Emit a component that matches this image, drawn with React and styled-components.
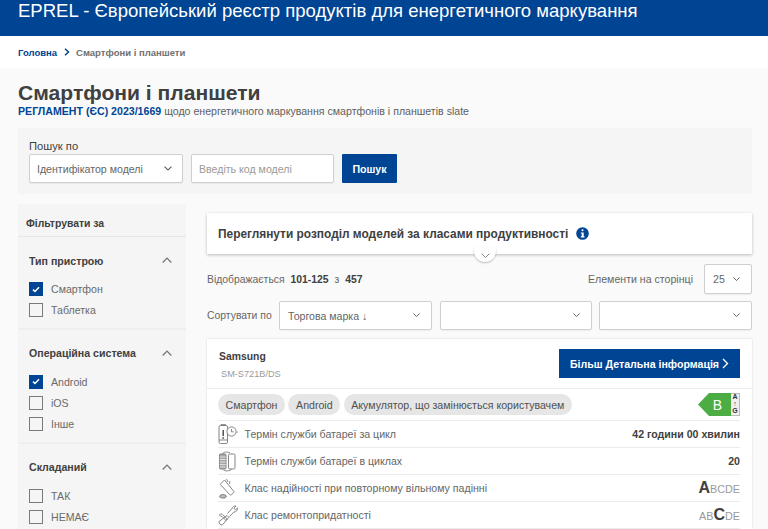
import React from "react";
import styled, { createGlobalStyle } from "styled-components";

const Global = createGlobalStyle`
  html, body { margin: 0; padding: 0; height: 529px; overflow: hidden; background: #fafafa; }
  * { box-sizing: border-box; }
  body { font-family: "Liberation Sans", Arial, sans-serif; color: #404040; }
`;

const Banner = styled.header`
  height: 36px; background: #004494; color: #fff; padding: 0 18px;
  font-size: 18.55px; line-height: 21px; white-space: nowrap;
`;
const Crumbs = styled.nav`
  height: 32px; background: #fff; padding: 0 18px; display: flex; align-items: center;
  font-size: 9.5px; font-weight: 700; color: #707070; gap: 6.5px;
`;
const CrumbLink = styled.span` color: #004494; `;
const Page = styled.div` padding: 12px 16px 0 18px; `;
const Title = styled.h1`
  margin: 0; font-size: 21.1px; line-height: 25px; font-weight: 700; color: #404040;
`;
const Subtitle = styled.p`
  margin: 0; font-size: 10.6px; line-height: 13px; color: #606060; height: 23px;
  b { color: #004494; }
`;
const SearchBand = styled.section`
  height: 66px; background: #f5f5f5; padding: 11px 11px 0; margin-bottom: 10px;
`;
const SearchLabel = styled.div`
  font-size: 11.2px; line-height: 14px; height: 15px; color: #404040;
`;
const SearchRow = styled.div` display: flex; gap: 8px; align-items: flex-start; `;
const Field = styled.div`
  width: ${(p) => p.$w}px; height: ${(p) => p.$h || 29}px; background: #fff; border: 1px solid #cfcfcf;
  border-radius: 2px; display: flex; align-items: center; justify-content: space-between;
  padding: 0 ${(p) => p.$pr || 10}px 0 ${(p) => p.$pl || 7}px; font-size: 10.6px; color: ${(p) => p.$muted ? "#9a9a9a" : "#666"};
  box-shadow: 0 1px 1px rgba(0,0,0,.05); flex: none;
`;
const SearchButton = styled.div`
  width: 55px; height: 29px; background: #004494; color: #fff; font-size: 10.6px; font-weight: 700;
  display: flex; align-items: center; justify-content: center; border-radius: 1px;
`;
const Columns = styled.div` display: flex; gap: 21px; align-items: flex-start; `;
const Sidebar = styled.aside` width: 168px; flex: none; background: #f5f5f5; `;
const SideHead = styled.div`
  height: 33px; padding: 8px 8px 0; font-size: 10.4px; line-height: 24px; font-weight: 700; color: #404040;
  border-bottom: 1px solid #e6e6e6;
`;
const Group = styled.section`
  padding: 16px 14px 7px 11px; border-bottom: 2px solid #efefef;
  &:last-child { border-bottom: 0; }
`;
const GroupHead = styled.div`
  display: flex; justify-content: space-between; align-items: center; height: 15px; margin-bottom: 10.5px;
  font-size: 10.6px; font-weight: 700; color: #404040;
`;
const CheckRow = styled.label`
  display: flex; align-items: center; gap: 8px; height: 21.2px; font-size: 10.6px; color: #6a6a6a;
`;
const Box = styled.span`
  width: 14px; height: 14px; flex: none; border: 1px solid ${(p) => (p.$on ? "#004494" : "#7a7a7a")};
  background: ${(p) => (p.$on ? "#004494" : "transparent")}; display: flex; align-items: center; justify-content: center;
`;
const Main = styled.main` flex: 1; min-width: 0; padding-top: 9px; `;
const Collapse = styled.div`
  position: relative; height: 41px; background: #fff; padding: 0 11px; display: flex; align-items: center; gap: 8px;
  font-size: 11.9px; font-weight: 700; color: #404040; box-shadow: 0 1px 3px rgba(0,0,0,.25); margin-bottom: 10px;
`;
const CollapseTab = styled.span`
  position: absolute; left: 267px; bottom: -8px; width: 22px; height: 14px; background: #fff;
  border-radius: 0 0 11px 11px; box-shadow: 0 1px 2px rgba(0,0,0,.25); display: flex; align-items: center; justify-content: center;
  padding-top: 1px;
`;
const InfoRow = styled.div`
  display: flex; justify-content: space-between; align-items: center; height: 30px; font-size: 10.4px; color: #666; margin-bottom: 7px;
  b { color: #404040; margin: 0 3px 0 3px; }
`;
const InfoSide = styled.div` display: flex; align-items: center; gap: 11px; font-size: 10.6px; `;
const SortRow = styled.div` display: flex; align-items: center; gap: 7.5px; height: 29px; font-size: 10.4px; color: #666; margin-bottom: 9px; `;
const SortLabel = styled.span` width: 64.5px; flex: none; white-space: nowrap; `;
const Card = styled.article` background: #fff; box-shadow: 0 0 2px rgba(0,0,0,.15); `;
const CardHead = styled.div`
  height: 50px; padding: 10px 12px 0 12px; display: flex; justify-content: space-between; border-bottom: 1px solid #ebebeb;
`;
const Brand = styled.div` font-size: 10.4px; font-weight: 700; line-height: 14px; color: #404040; margin-top: 1px; `;
const Model = styled.div` font-size: 9.2px; line-height: 13px; margin: 4px 0 0 2px; color: #9a9a9a; `;
const DetailsButton = styled.div`
  width: 181px; height: 29px; background: #004494; color: #fff; font-size: 10.6px; font-weight: 700;
  display: flex; align-items: center; justify-content: center; gap: 3px;
`;
const Content = styled.div` padding: 0 12px 0 11px; `;
const Chips = styled.div`
  height: 32px; display: flex; align-items: center; justify-content: space-between; border-bottom: 1px solid #ebebeb;
`;
const ChipList = styled.div` display: flex; gap: 3.5px; `;
const Chip = styled.span`
  height: 21px; padding: 0 7.6px; border-radius: 11px; background: #e6e6e6; color: #505050; font-size: 10.6px;
  display: flex; align-items: center;
`;
const Row = styled.div`
  height: 27px; display: flex; align-items: center; border-bottom: 1px solid #ebebeb; font-size: 10.6px; color: #666;
`;
const RowIcon = styled.span` width: 26.5px; flex: none; display: flex; justify-content: flex-start; `;
const RowValue = styled.span` margin-left: auto; font-weight: 700; color: #404040; font-size: 10.6px; `;
const Scale = styled.span`
  margin-left: auto; color: #999; font-size: 10.8px; font-weight: 400; display: flex; align-items: baseline;
  b { color: #404040; font-size: 16px; font-weight: 700; }
`;
const EnergyLabel = styled.div` display: flex; align-items: stretch; height: 23px; `;
const ArrowTag = styled.span`
  width: 33px; background: #4bad43; color: #fff; font-size: 14px; display: flex; align-items: center; justify-content: center;
  clip-path: polygon(11px 0, 100% 0, 100% 100%, 11px 100%, 0 50%); padding-left: 6px;
`;
const ScaleKey = styled.span`
  width: 9px; border: 1px solid #bbb; border-left: 0; font-size: 7px; font-weight: 700; line-height: 6.8px; text-align: center;
  display: flex; flex-direction: column; justify-content: space-between; color: #333; background: #f0f0f0; padding: 0;
`;

const Chevron = ({ up, size = 9, color = "#555", w = 1.3 }) => (
  <svg width={size} height={size * 0.62} viewBox="0 0 10 6" fill="none" stroke={color} strokeWidth={w}>
    <path d={up ? "M.7 5.4 5 1l4.3 4.4" : "M.7.6 5 5 9.3.6"} />
  </svg>
);
const Check = () => (
  <svg width="8" height="7" viewBox="0 0 8 7" fill="none" stroke="#fff" strokeWidth="1.5"><path d="M1 3.6 3 5.5 7 1.2" /></svg>
);
const Info = () => (
  <svg width="13" height="13" viewBox="0 0 13 13">
    <circle cx="6.5" cy="6.5" r="6.3" fill="#004494" />
    <rect x="5.5" y="2.3" width="2" height="2" rx=".8" fill="#fff" />
    <path d="M4.8 5.4h2.9v3.8h.8v1.2H4.8V9.200h.9V6.600h-.9z" fill="#fff" />
  </svg>
);
const stroke = { fill: "none", stroke: "#777", strokeWidth: 0.9 };
const PhoneClock = () => (
  <svg width="21" height="21" viewBox="0 0 21 21" {...stroke}>
    <rect x="1" y="1.500" width="8.500" height="18" rx="1.400" />
    <path d="M3 1.500V.6h4.500v.9M1 16h8.500" />
    <path d="M5.200 6v6" strokeWidth="1.400" stroke="#444" />
    <circle cx="5.200" cy="14" r=".7" fill="#444" />
    <circle cx="13.500" cy="7.500" r="4.600" fill="#fff" />
    <path d="M13.500 5v2.800h2.200M18.500 8.500l1.200-.6" />
  </svg>
);
const PhoneCycle = () => (
  <svg width="21" height="21" viewBox="0 0 21 21" {...stroke}>
    <rect x="1.500" y="3" width="6.500" height="15" rx="1" fill="#aaa" />
    <path d="M1.500 6h6.500M1.500 8.500h6.500M1.500 11h6.500M1.500 13.500h6.500M1.500 16h6.500" stroke="#fff" strokeWidth=".6" />
    <rect x="10.500" y="3" width="6.500" height="15" rx="1.300" />
    <path d="M4.500 3C5 1 9 .5 12 1.800M13.500 18c-.5 2-5 2.400-8 1.200" />
  </svg>
);
const DropIcon = () => (
  <svg width="21" height="21" viewBox="0 0 21 21" {...stroke}>
    <path d="M3 5.500 6.500 2l9 11c.6.700.5 1.300 0 1.800l-2 1.800c-.6.500-1.300.5-1.800 0L3 7.200c-.5-.6-.5-1.200 0-1.700z" />
    <path d="M8.500 1l1.500 3M12 3l-.5 3" />
    <path d="M2 17.500c2-1.500 4.500-1.300 6.500.5l-1.500 2h-3.500l-2-1.200z" fill="#bbb" />
  </svg>
);
const WrenchIcon = () => (
  <svg width="21" height="21" viewBox="0 0 21 21" {...stroke}>
    <path d="M1 16.500 9 10.500l1.800 1.800L4.500 19.800c-1.800.9-4-1.600-3.500-3.300z" />
    <path d="M9.500 8.500 14 3.500c.3-1.600 2.300-2.900 4-2.400l-2 2 1.300 1.700 2.200-1.700c.3 1.900-1.500 4-3.600 3.900l-4.400 4.500" />
    <path d="M1.500 9.500c1.300-.8 3-.6 3.800.6l4 4-1.300 1.300-4-4c-1.200.2-2.400-.6-2.500-1.900z" />
  </svg>
);

const FilterGroup = ({ title, items }) => (
  <Group>
    <GroupHead>{title}<Chevron up size={10} color="#777" /></GroupHead>
    {items.map(([t, on]) => (
      <CheckRow key={t}><Box $on={on}>{on && <Check />}</Box>{t}</CheckRow>
    ))}
  </Group>
);

export default function App() {
  return (
    <>
      <Global />
      <Banner>EPREL - Європейський реєстр продуктів для енергетичного маркування</Banner>
      <Crumbs>
        <CrumbLink>Головна</CrumbLink>
        <svg width="6" height="8" viewBox="0 0 6 8" fill="none" stroke="#004494" strokeWidth="1.500"><path d="M1 .8 4.500 4 1 7.200" /></svg>
        Смартфони і планшети
      </Crumbs>
      <Page>
        <Title>Смартфони і планшети</Title>
        <Subtitle><b>РЕГЛАМЕНТ (ЄС) 2023/1669</b> щодо енергетичного маркування смартфонів і планшетів slate</Subtitle>
        <SearchBand>
          <SearchLabel>Пошук по</SearchLabel>
          <SearchRow>
            <Field $w={154}>Ідентифікатор моделі<Chevron size={8} /></Field>
            <Field $w={143} $muted>Введіть код моделі</Field>
            <SearchButton>Пошук</SearchButton>
          </SearchRow>
        </SearchBand>
        <Columns>
          <Sidebar>
            <SideHead>Фільтрувати за</SideHead>
            <FilterGroup title="Тип пристрою" items={[["Смартфон", true], ["Таблетка", false]]} />
            <FilterGroup title="Операційна система" items={[["Android", true], ["iOS", false], ["Інше", false]]} />
            <FilterGroup title="Складаний" items={[["ТАК", false], ["НЕМАЄ", false]]} />
          </Sidebar>
          <Main>
            <Collapse>
              Переглянути розподіл моделей за класами продуктивності <Info />
              <CollapseTab><Chevron size={9} color="#777" w={1} /></CollapseTab>
            </Collapse>
            <InfoRow>
              <span>Відображається <b>101-125</b> з <b>457</b></span>
              <InfoSide>
                Елементи на сторінці
                <Field $w={48} $h={30} $pl={8} $pr={11}>25<Chevron size={7} /></Field>
              </InfoSide>
            </InfoRow>
            <SortRow>
              <SortLabel>Сортувати по</SortLabel>
              <Field $w={153} $pl={8} $pr={11}>Торгова марка ↓<Chevron size={7} /></Field>
              <Field $w={152} $pr={11}><span /><Chevron size={7} /></Field>
              <Field $w={153} $pr={11}><span /><Chevron size={7} /></Field>
            </SortRow>
            <Card>
              <CardHead>
                <div><Brand>Samsung</Brand><Model>SM-S721B/DS</Model></div>
                <DetailsButton>Більш Детальна інформація
                  <svg width="7" height="11" viewBox="0 0 7 11" fill="none" stroke="#fff" strokeWidth="1.400"><path d="M1 1l4.500 4.500L1 10" /></svg>
                </DetailsButton>
              </CardHead>
              <Content>
                <Chips>
                  <ChipList>
                    <Chip>Смартфон</Chip><Chip>Android</Chip><Chip>Акумулятор, що замінюється користувачем</Chip>
                  </ChipList>
                  <EnergyLabel>
                    <ArrowTag>B</ArrowTag>
                    <ScaleKey><span>A</span><span>↑</span><span>G</span></ScaleKey>
                  </EnergyLabel>
                </Chips>
                <Row><RowIcon><PhoneClock /></RowIcon>Термін служби батареї за цикл<RowValue>42 години 00 хвилин</RowValue></Row>
                <Row><RowIcon><PhoneCycle /></RowIcon>Термін служби батареї в циклах<RowValue>20</RowValue></Row>
                <Row><RowIcon><DropIcon /></RowIcon>Клас надійності при повторному вільному падінні<Scale><b>A</b>BCDE</Scale></Row>
                <Row><RowIcon><WrenchIcon /></RowIcon>Клас ремонтопридатності<Scale>AB<b>C</b>DE</Scale></Row>
              </Content>
            </Card>
          </Main>
        </Columns>
      </Page>
    </>
  );
}
